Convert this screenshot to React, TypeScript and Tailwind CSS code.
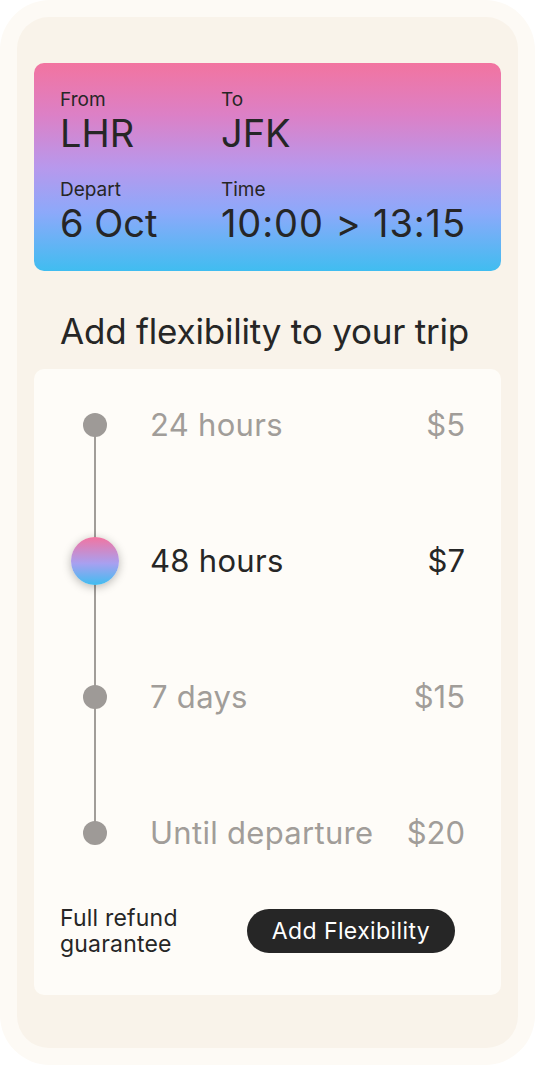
export default function App() {
  const options = [
    { label: "24 hours", price: "$5", active: false },
    { label: "48 hours", price: "$7", active: true },
    { label: "7 days", price: "$15", active: false },
    { label: "Until departure", price: "$20", active: false },
  ];

  return (
    <div
      className="w-[535px] h-[1065px] bg-white"
      style={{ fontFamily: "Inter, 'Noto Sans', sans-serif" }}
    >
      <div className="w-full h-full rounded-[50px] bg-[#fdfaf5] p-[17px]">
        <div className="h-full rounded-[32px] bg-[#f9f3ea] px-[17px] pt-[46px]">
          {/* flight card */}
          <section className="h-[208px] rounded-[10px] bg-[linear-gradient(180deg,#f274a0_0%,#dc80c6_25%,#b898ec_50%,#8ca9fa_72%,#40bdf0_100%)] px-[26px] pt-[26px] text-[#262626]">
            <div className="grid grid-cols-[161px_1fr] gap-y-[24px]">
              <div>
                <p className="text-[19px] leading-[22px]">From</p>
                <p className="text-[38px] leading-[44px]">LHR</p>
              </div>
              <div>
                <p className="text-[19px] leading-[22px]">To</p>
                <p className="text-[38px] leading-[44px]">JFK</p>
              </div>
              <div>
                <p className="text-[19px] leading-[22px]">Depart</p>
                <p className="text-[38px] leading-[44px]">6 Oct</p>
              </div>
              <div>
                <p className="text-[19px] leading-[22px]">Time</p>
                <p className="text-[38px] leading-[44px] whitespace-nowrap tracking-[0.9px]">10:00 &gt; 13:15</p>
              </div>
            </div>
          </section>

          <h2 className="mt-[40px] pl-[26px] text-[35px] leading-[40px] text-[#262626] tracking-[-0.2px]">
            Add flexibility to your trip
          </h2>

          {/* options card */}
          <section className="mt-[18px] rounded-[10px] bg-[#fefcf8] pt-[20px] pb-[38px]">
            <div className="relative flex flex-col gap-[64px]">
              <div className="absolute left-[60px] top-[36px] bottom-[36px] w-[2px] bg-[#a19d99]" />
              {options.map((o) => (
                <div key={o.label} className="relative flex items-center h-[72px] pl-[37px] pr-[36px]">
                  <div className="w-12 flex justify-center">
                    {o.active ? (
                      <span className="block w-12 h-12 rounded-full bg-[linear-gradient(180deg,#f274a0_0%,#a8a0f0_55%,#40bdf0_100%)] shadow-[0_2px_10px_rgba(0,0,0,0.28)]" />
                    ) : (
                      <span className="block w-6 h-6 rounded-full bg-[#9e9a97]" />
                    )}
                  </div>
                  <span
                    className={`ml-[31px] flex-1 text-[31px] leading-[38px] tracking-[0.3px] ${
                      o.active ? "text-[#262626]" : "text-[#a19d99]"
                    }`}
                  >
                    {o.label}
                  </span>
                  <span
                    className={`text-[31px] leading-[38px] ${
                      o.active ? "text-[#262626]" : "text-[#a19d99]"
                    }`}
                  >
                    {o.price}
                  </span>
                </div>
              ))}
            </div>

            <div className="mt-[36px] flex items-center justify-between pl-[26px] pr-[46px]">
              <p className="text-[23px] leading-[26px] text-[#262626] tracking-[0.2px]">
                Full refund
                <br />
                guarantee
              </p>
              <button className="h-[44px] w-[208px] rounded-full bg-[#262626] text-white text-[23px] leading-[26px] tracking-[0.4px]">
                Add Flexibility
              </button>
            </div>
          </section>
        </div>
      </div>
    </div>
  );
}
